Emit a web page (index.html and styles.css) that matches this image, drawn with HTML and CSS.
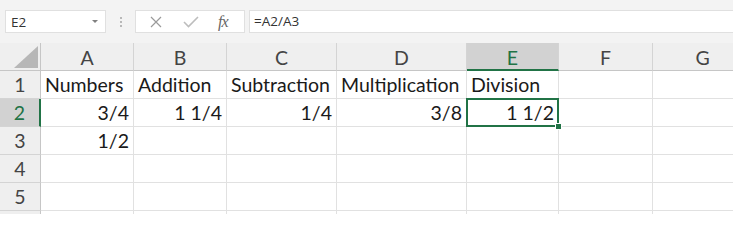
FILE: index.html
```html
<!DOCTYPE html>
<html>
<head>
<meta charset="utf-8">
<link rel="stylesheet" href="styles.css">
</head>
<body>
<div class="toolbar">
  <div class="namebox"><span class="ref">E2</span><span class="caret"></span></div>
  <div class="grip"><span></span><span></span><span></span></div>
  <div class="fxbox">
    <svg class="ic-x" width="12" height="12" viewBox="0 0 12 12"><path d="M1 1L11 11M11 1L1 11" stroke="#9a9a9a" stroke-width="1.2" fill="none"/></svg>
    <svg class="ic-check" width="16" height="12" viewBox="0 0 16 12"><path d="M1 6L5.5 10.5L15 1" stroke="#bdbdbd" stroke-width="1.6" fill="none"/></svg>
    <span class="fx">fx</span>
  </div>
  <div class="formula">=A2/A3</div>
</div>
<div class="sheet">
  <div class="hd corner"><svg width="24" height="22" viewBox="0 0 24 22"><polygon points="24,0 24,22 0,22" fill="#b7b7b7"/></svg></div>
  <div class="hd col">A</div>
  <div class="hd col">B</div>
  <div class="hd col">C</div>
  <div class="hd col">D</div>
  <div class="hd col sel">E</div>
  <div class="hd col">F</div>
  <div class="hd col">G</div>

  <div class="hd row">1</div>
  <div class="c">Numbers</div>
  <div class="c">Addition</div>
  <div class="c">Subtraction</div>
  <div class="c">Multiplication</div>
  <div class="c">Division</div>
  <div class="c"></div>
  <div class="c"></div>

  <div class="hd row sel">2</div>
  <div class="c num">3/4</div>
  <div class="c num">1 1/4</div>
  <div class="c num">1/4</div>
  <div class="c num">3/8</div>
  <div class="c num active">1 1/2<span class="handle"></span></div>
  <div class="c"></div>
  <div class="c"></div>

  <div class="hd row">3</div>
  <div class="c num">1/2</div>
  <div class="c"></div>
  <div class="c"></div>
  <div class="c"></div>
  <div class="c"></div>
  <div class="c"></div>
  <div class="c"></div>

  <div class="hd row">4</div>
  <div class="c"></div>
  <div class="c"></div>
  <div class="c"></div>
  <div class="c"></div>
  <div class="c"></div>
  <div class="c"></div>
  <div class="c"></div>

  <div class="hd row">5</div>
  <div class="c"></div>
  <div class="c"></div>
  <div class="c"></div>
  <div class="c"></div>
  <div class="c"></div>
  <div class="c"></div>
  <div class="c"></div>

  <div class="hd row">6</div>
  <div class="c"></div>
  <div class="c"></div>
  <div class="c"></div>
  <div class="c"></div>
  <div class="c"></div>
  <div class="c"></div>
  <div class="c"></div>
</div>
</body>
</html>
```

FILE: styles.css
```css
html, body {
  margin: 0;
  padding: 0;
  background: #ffffff;
  overflow: hidden;
}
body {
  width: 733px;
  height: 214px;
}
.toolbar {
  height: 43px;
  box-sizing: border-box;
  background: #f3f3f3;
  display: flex;
  align-items: flex-start;
  padding-top: 10px;
  padding-left: 5px;
  font-family: "Open Sans", "Noto Sans", sans-serif;
  font-size: 13.5px;
  color: #333;
}
.namebox {
  width: 101px;
  height: 23px;
  box-sizing: border-box;
  background: #fff;
  border: 1px solid #e0e0e0;
  display: flex;
  align-items: center;
  justify-content: space-between;
  padding: 0 7px 0 5px;
}
.caret {
  width: 0;
  height: 0;
  border-left: 3px solid transparent;
  border-right: 3px solid transparent;
  border-top: 3px solid #808080;
}
.grip {
  width: 29px;
  height: 23px;
  display: flex;
  flex-direction: column;
  align-items: center;
  justify-content: center;
  gap: 2px;
}
.grip span {
  width: 2px;
  height: 2px;
  background: #b8b8b8;
}
.fxbox {
  width: 110px;
  height: 23px;
  box-sizing: border-box;
  background: #fff;
  border: 1px solid #e0e0e0;
  display: flex;
  align-items: center;
  padding-left: 14px;
}
.ic-x { margin-right: 21px; }
.ic-check { margin-right: 19px; }
.fx {
  font-family: "Liberation Serif", serif;
  font-style: italic;
  font-size: 16px;
  color: #666;
  letter-spacing: -1px;
}
.formula {
  flex: 1;
  height: 23px;
  box-sizing: border-box;
  margin-left: 4px;
  background: #fff;
  border: 1px solid #e0e0e0;
  border-right: none;
  padding-left: 4px;
  line-height: 21px;
}
.sheet {
  display: grid;
  grid-template-columns: 41px 93px 93px 110px 130px 92px 94px 100px;
  grid-template-rows: 28px repeat(6, 28px);
  font-family: "Lato", sans-serif;
  font-size: 19.5px;
  color: #1a1a1a;
}
.hd {
  background: #efefef;
  color: #444;
  box-sizing: border-box;
  display: flex;
  align-items: center;
  justify-content: center;
}
.col {
  border-right: 1px solid #d4d4d4;
  border-bottom: 1px solid #c6c6c6;
  padding-top: 2px;
}
.row {
  border-right: 1px solid #c6c6c6;
  border-bottom: 1px solid #d4d4d4;
}
.corner {
  border-right: 1px solid #c6c6c6;
  border-bottom: 1px solid #c6c6c6;
  align-items: flex-end;
  justify-content: flex-end;
  padding: 0 2px 2px 0;
}
.corner svg { display: block; }
.hd.sel {
  background: #d2d2d2;
  color: #217346;
}
.col.sel { border-bottom: 2px solid #217346; }
.row.sel { border-right: 2px solid #217346; }
.c {
  box-sizing: border-box;
  border-right: 1px solid #e1e1e1;
  border-bottom: 1px solid #e1e1e1;
  padding: 0 4px;
  display: flex;
  align-items: flex-end;
  padding-bottom: 2px;
  white-space: nowrap;
  position: relative;
}
.num { justify-content: flex-end; }
.active::after {
  content: "";
  position: absolute;
  left: -1px;
  top: -1px;
  right: -1px;
  bottom: -1px;
  border: 2px solid #217346;
}
.handle {
  position: absolute;
  right: -4px;
  bottom: -4px;
  width: 5px;
  height: 5px;
  background: #217346;
  border: 1px solid #fff;
  z-index: 2;
}
```
